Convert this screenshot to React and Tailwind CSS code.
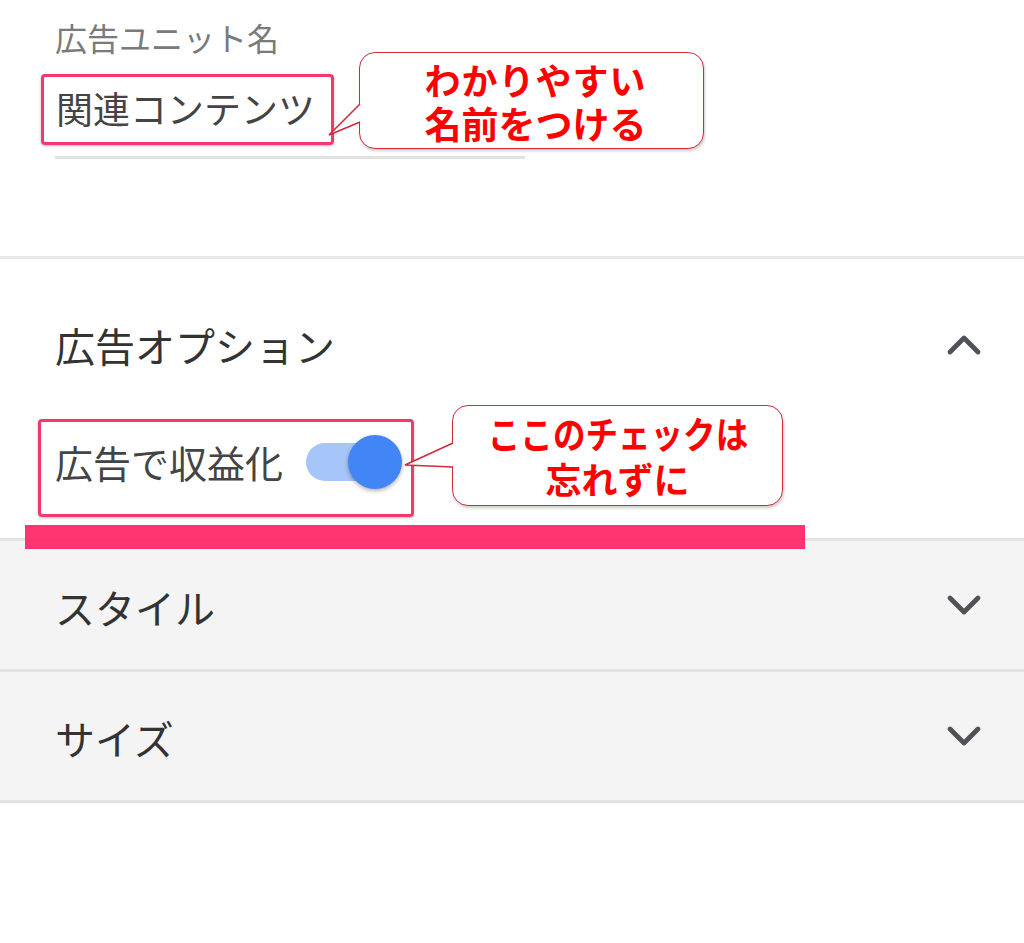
import React, { useState } from 'react';

const Chevron = ({ up }) => (
  <svg width="36" height="22" viewBox="0 0 36 22" fill="none" className="shrink-0">
    <path
      d={up ? 'M4 18L18 4L32 18' : 'M4 4L18 18L32 4'}
      stroke="#4f5257"
      strokeWidth={4.8}
      strokeLinecap="round"
      strokeLinejoin="round"
    />
  </svg>
);

// callout tail: base on the box's left edge, tip pointing left
const Tail = ({ left, top, w, h, points, line }) => (
  <svg
    className="absolute"
    style={{ left, top }}
    width={w}
    height={h}
    viewBox={`0 0 ${w} ${h}`}
  >
    <polygon points={points} fill="#fff" />
    <polyline points={line} fill="none" stroke="#d22a3c" strokeWidth={1.6} strokeLinejoin="miter" />
  </svg>
);

const AccordionRow = ({ title }) => (
  <div className="flex items-center justify-between h-[131px] pl-[55px] pr-[42px] border-b-[3px] border-[#e3e3e5]">
    <span className="text-[40px] leading-[48px] text-[#333] pt-[4px]">{title}</span>
    <Chevron />
  </div>
);

const App = () => {
  const [monetize, setMonetize] = useState(true);

  return (
    <div
      className="relative w-[1024px] h-[943px] bg-white overflow-hidden"
      style={{ fontFamily: '"Noto Sans CJK JP", "Noto Sans", sans-serif' }}
    >
      {/* Ad unit name */}
      <div className="h-[259px] pl-[55px] pt-[18px] border-b-[3px] border-[#e8e8e8]">
        <div className="text-[32px] leading-[38px] text-[#7a7a7a]">広告ユニット名</div>
        <div className="mt-[18px] -ml-[14px] w-[293px] h-[71px] flex items-center pl-[12px] pb-[4px] border-[3px] border-[#f2386c] rounded-[4px] shadow-[0_1px_3px_rgba(0,0,0,0.25)]">
          <span className="text-[37px] leading-[44px] text-[#444] whitespace-nowrap">関連コンテンツ</span>
        </div>
        <div className="mt-[11px] w-[470px] h-[3px] bg-[#e2e2e2]" />
      </div>

      {/* Ad options */}
      <div className="pl-[55px] pr-[42px] pt-[62px] pb-[21px]">
        <div className="flex items-center justify-between h-[48px]">
          <span className="text-[40px] leading-[48px] text-[#333]">広告オプション</span>
          <Chevron up />
        </div>
        <div className="mt-[50px] -ml-[17px] w-[376px] h-[98px] pl-[14px] pt-[14px] border-[3px] border-[#f2386c] rounded-[4px] shadow-[0_1px_3px_rgba(0,0,0,0.25)]">
          <div className="flex items-center h-[52px]">
            <span className="text-[38px] leading-[46px] text-[#444]">広告で収益化</span>
            <button
              onClick={() => setMonetize(!monetize)}
              className="relative ml-[23px] w-[96px] h-[54px] flex items-center"
            >
              <span className="block w-[84px] h-[38px] rounded-full bg-[#a6c5f8]" />
              <span
                className={`absolute top-0 w-[54px] h-[54px] rounded-full bg-[#4285f4] shadow-[0_2px_4px_rgba(0,0,0,0.3)] ${
                  monetize ? 'left-[42px]' : 'left-0'
                }`}
              />
            </button>
          </div>
        </div>
      </div>

      {/* Collapsed sections */}
      <div className="bg-[#f4f4f4] border-t-[3px] border-[#e3e3e3]">
        <AccordionRow title="スタイル" />
        <AccordionRow title="サイズ" />
      </div>

      {/* Annotations */}
      <div className="absolute left-[359px] top-[52px] w-[345px] h-[97px] bg-white border-[1.6px] border-[#d22a3c] rounded-[16px] shadow-[1px_2px_3px_rgba(0,0,0,0.2)] flex flex-col items-center justify-center pl-[8px]">
        <span className="text-[36px] leading-[44px] font-bold text-[#ff0000] tracking-[1px]">わかりやすい</span>
        <span className="text-[37px] leading-[44px] font-bold text-[#ff0000]">名前をつける</span>
      </div>
      <Tail left={326} top={98} w={38} h={40} points="36,6 33,6 3,37 33,24 36,24" line="34,6 3,37 34,24" />

      <div className="absolute left-[452px] top-[405px] w-[331px] h-[101px] bg-white border-[1.6px] border-[#d22a3c] rounded-[16px] shadow-[1px_2px_3px_rgba(0,0,0,0.2)] flex flex-col items-center justify-center">
        <span className="inline-block text-[37px] leading-[45px] font-bold text-[#ff0000] scale-x-[0.88] whitespace-nowrap">
          ここのチェックは
        </span>
        <span className="text-[36px] leading-[45px] font-bold text-[#ff0000]">忘れずに</span>
      </div>
      <Tail left={403} top={440} w={53} h={30} points="51,3 49,3 2,25 49,27 51,27" line="50,3 2,25 50,27" />

      <div className="absolute left-[25px] top-[525px] w-[780px] h-[24px] bg-[#ff1f62]/90" />
    </div>
  );
};

export default App;
